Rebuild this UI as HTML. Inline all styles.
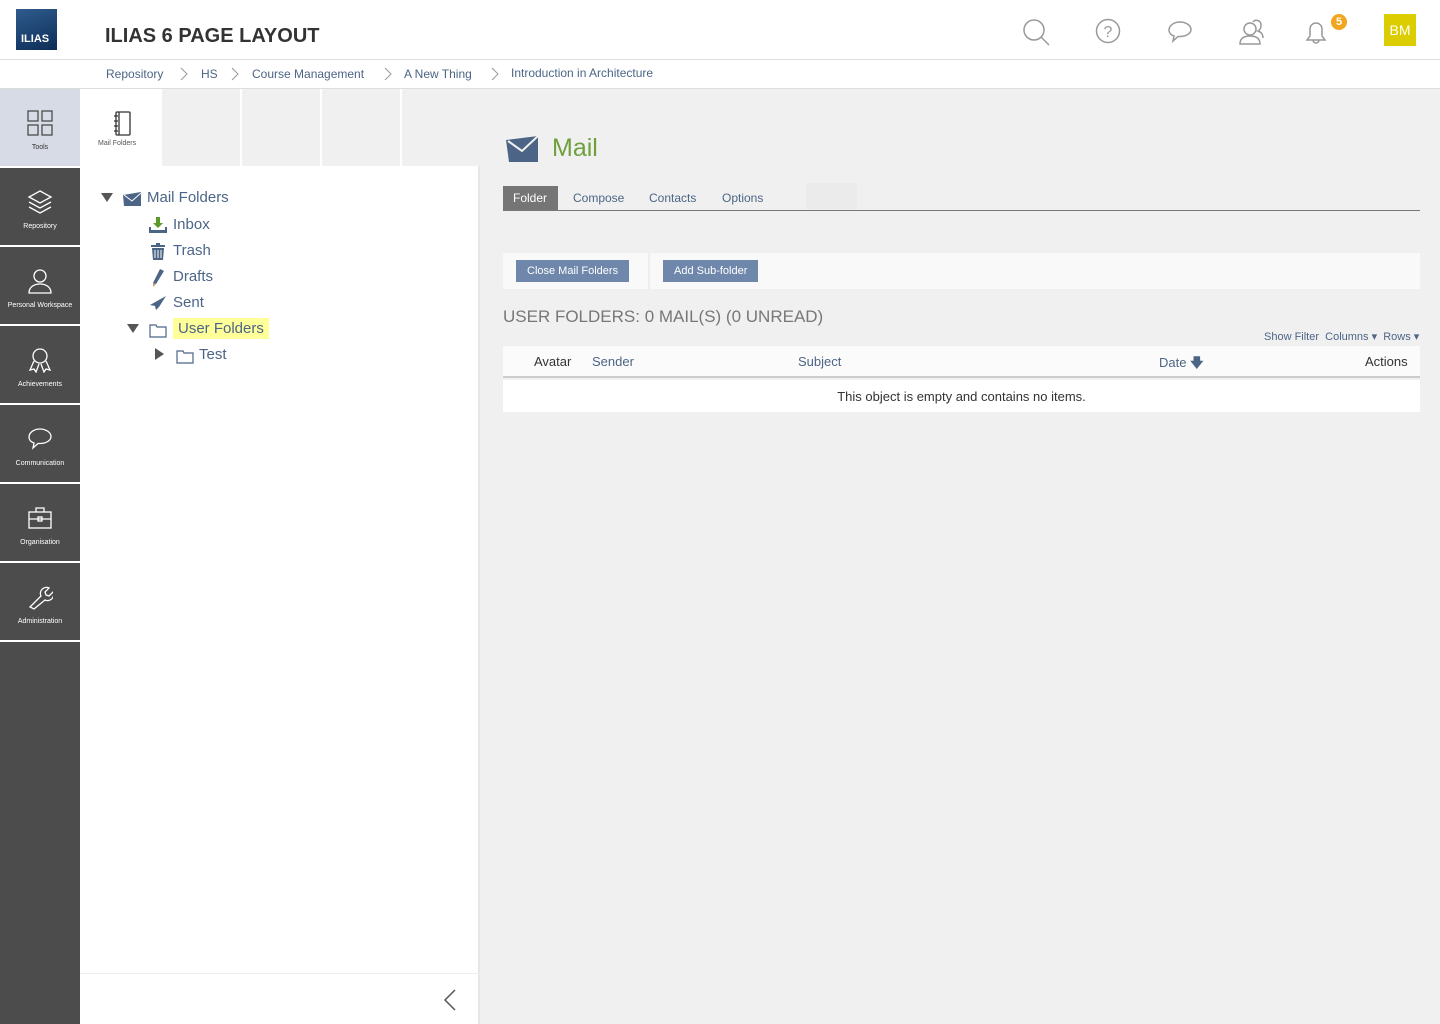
<!DOCTYPE html><html><head><meta charset="utf-8"><style>
*{box-sizing:border-box;margin:0;padding:0}
body{width:1440px;height:1024px;overflow:hidden;background:#f0f0f0;font-family:"Liberation Sans",sans-serif;position:relative}
.a{position:absolute}
.hdr{left:0;top:0;width:1440px;height:60px;background:#fff;border-bottom:1px solid #ddd}
.bc{left:0;top:60px;width:1440px;height:29px;background:#fff;border-bottom:1px solid #ddd;font-size:12px;color:#4c6586}
.side{left:0;top:89px;width:80px;height:935px;background:#4c4c4c}
.tile{position:absolute;left:0;width:80px;height:79px;color:#fff;font-size:7px;text-align:center;border-bottom:2px solid #fff}
.tile svg{display:block;margin:21px auto 8px}
.slate{left:80px;top:89px;width:400px;height:935px;background:#fff;border-right:2px solid #e6e6e6}
.tr{font-size:15px;color:#4c6586}
.btn{background:#6e87aa;color:#fff;font-size:11px;padding:5px 11px;position:absolute}
.ch{position:absolute;top:7px}
</style></head><body>
<div class="a hdr"></div>
<div class="a" style="left:16px;top:9px;width:41px;height:41px;background:linear-gradient(160deg,#2f5c8e,#0d2d57);color:#fff;font-weight:bold;font-size:11px;padding:24px 0 0 5px">ILIAS</div>
<div class="a" style="left:105px;top:25px;font-size:20px;font-weight:bold;color:#333">ILIAS 6 PAGE LAYOUT</div>
<svg class="a" style="left:1022px;top:18px" width="28" height="28" fill="none" stroke="#999" stroke-width="1.5"><circle cx="12" cy="12" r="10"/><path d="M19 19l8 8"/></svg>
<svg class="a" style="left:1095px;top:18px" width="26" height="26" fill="none" stroke="#999" stroke-width="1.5"><circle cx="13" cy="13" r="11.5"/><text x="13" y="19" font-size="16" text-anchor="middle" fill="#999" stroke="none" font-family="Liberation Sans">?</text></svg>
<svg class="a" style="left:1167px;top:20px" width="26" height="24" fill="none" stroke="#999" stroke-width="1.5"><path d="M13 2C7 2 2 5.5 2 10c0 3 2 5 5 6l-1 5 5-4.5h2c6 0 11-3 11-7S19 2 13 2z"/></svg>
<svg class="a" style="left:1238px;top:18px" width="28" height="28" fill="none" stroke="#999" stroke-width="1.5"><circle cx="12" cy="11" r="6"/><path d="M2 26c0-6 4-8 10-8s10 2 10 8z"/><path d="M15 4c2-3 8-2 8 3s-3 6-3 6c3 1 5 3 5 7"/></svg>
<svg class="a" style="left:1303px;top:19px" width="26" height="26" fill="none" stroke="#999" stroke-width="1.5"><path d="M4 21h18l-3-4v-7a6 6 0 0 0-12 0v7z"/><path d="M10 21a3 3 0 0 0 6 0"/></svg>
<div class="a" style="left:1331px;top:14px;width:16px;height:16px;border-radius:8px;background:#f2a51f;color:#fff;font-size:11px;font-weight:bold;text-align:center;line-height:16px">5</div>
<div class="a" style="left:1384px;top:14px;width:32px;height:32px;background:#dccd00;color:#fff;font-size:14px;text-align:center;line-height:32px">BM</div>
<div class="a bc"><span class="a" style="left:106px;top:7px">Repository</span><svg class="ch" style="left:180px" width="8" height="14" fill="none" stroke="#999"><path d="M1 1l6 6-6 6"/></svg><span class="a" style="left:201px;top:7px">HS</span><svg class="ch" style="left:231px" width="8" height="14" fill="none" stroke="#999"><path d="M1 1l6 6-6 6"/></svg><span class="a" style="left:252px;top:7px">Course Management</span><svg class="ch" style="left:384px" width="8" height="14" fill="none" stroke="#999"><path d="M1 1l6 6-6 6"/></svg><span class="a" style="left:404px;top:7px">A New Thing</span><svg class="ch" style="left:491px" width="8" height="14" fill="none" stroke="#999"><path d="M1 1l6 6-6 6"/></svg><span class="a" style="left:511px;top:6px">Introduction in Architecture</span></div>
<div class="a side">
<div class="tile" style="top:0;background:#d6dbe5;color:#333"><svg width="26" height="26" fill="none" stroke="#4c4c4c" stroke-width="1.3"><rect x="1" y="1" width="10" height="10"/><rect x="15" y="1" width="10" height="10"/><rect x="1" y="15" width="10" height="10"/><rect x="15" y="15" width="10" height="10"/></svg>Tools</div>
<div class="tile" style="top:79px"><svg width="26" height="26" fill="none" stroke="#fff" stroke-width="1.3"><path d="M13 2l11 6-11 6L2 8z"/><path d="M2 13l11 6 11-6"/><path d="M2 18l11 6 11-6"/></svg>Repository</div>
<div class="tile" style="top:158px"><svg width="26" height="26" fill="none" stroke="#fff" stroke-width="1.3"><circle cx="13" cy="8" r="6"/><path d="M2 25c0-6 5-9 11-9s11 3 11 9z"/></svg>Personal Workspace</div>
<div class="tile" style="top:237px"><svg width="26" height="26" fill="none" stroke="#fff" stroke-width="1.3"><circle cx="13" cy="9" r="7"/><path d="M7 14l-4 9 4-1 2 3 3-8M19 14l4 9-4-1-2 3-3-8"/></svg>Achievements</div>
<div class="tile" style="top:316px"><svg width="26" height="26" fill="none" stroke="#fff" stroke-width="1.3"><path d="M13 3C7 3 2 6.5 2 11c0 3 2 5 5 6l-1 5 5-4.5h2c6 0 11-3 11-7S19 3 13 3z"/></svg>Communication</div>
<div class="tile" style="top:395px"><svg width="26" height="26" fill="none" stroke="#fff" stroke-width="1.3"><rect x="2" y="7" width="22" height="16"/><path d="M9 7V3h8v4M2 14h22"/><rect x="11" y="12" width="4" height="4"/></svg>Organisation</div>
<div class="tile" style="top:474px"><svg width="26" height="26" fill="none" stroke="#fff" stroke-width="1.3"><path d="M3 23l11-11a6 6 0 0 1 8-8l-4 4 1 3 3 1 4-4a6 6 0 0 1-8 8L7 25z"/></svg>Administration</div>
</div>
<div class="a slate">
<div class="a" style="left:82px;top:0;width:318px;height:77px;background:#f0f0f0"></div>
<div class="a" style="left:160px;top:0;width:2px;height:77px;background:#fff"></div>
<div class="a" style="left:240px;top:0;width:2px;height:77px;background:#fff"></div>
<div class="a" style="left:320px;top:0;width:2px;height:77px;background:#fff"></div>
<svg class="a" style="left:31px;top:22px" width="22" height="26" fill="none" stroke="#333" stroke-width="1.3"><rect x="5" y="1" width="14" height="23" rx="1"/><path d="M8 1v23M3 5h4M3 10h4M3 15h4M3 20h4"/></svg>
<div class="a" style="left:18px;top:51px;font-size:7px;color:#555">Mail Folders</div>
<div class="a" style="left:21px;top:104px;width:0;height:0;border:6px solid transparent;border-top:9px solid #555;border-bottom:0"></div>
<svg class="a" style="left:43px;top:103px" width="18" height="14"><path d="M0 3l18-3v14H1z" fill="#4c6586"/><path d="M1 3l8 6 9-8" stroke="#fff" fill="none"/></svg>
<div class="a tr" style="left:67px;top:100px">Mail Folders</div>
<svg class="a" style="left:69px;top:128px" width="18" height="16"><path d="M7 0h4v6h3l-5 5-5-5h3z" fill="#5a9a2a"/><path d="M0 10h2v3h14v-3h2v6H0z" fill="#4c6586"/></svg>
<div class="a tr" style="left:93px;top:127px">Inbox</div>
<svg class="a" style="left:71px;top:154px" width="14" height="17" fill="#4c6586"><rect x="0" y="2" width="14" height="2"/><rect x="5" y="0" width="4" height="2"/><path d="M1 5h12l-1 12H2z"/><path d="M4 7v8M7 7v8M10 7v8" stroke="#fff"/></svg>
<div class="a tr" style="left:93px;top:153px">Trash</div>
<svg class="a" style="left:72px;top:180px" width="12" height="18"><path d="M8 0l4 2-8 13-3-1z" fill="#4c6586"/><path d="M1 14l3 1-3 3z" fill="#c96"/></svg>
<div class="a tr" style="left:93px;top:179px">Drafts</div>
<svg class="a" style="left:70px;top:207px" width="16" height="14"><path d="M16 0L0 9l5 1 1 4 3-3z" fill="#4c6586"/></svg>
<div class="a tr" style="left:93px;top:205px">Sent</div>
<div class="a" style="left:47px;top:235px;width:0;height:0;border:6px solid transparent;border-top:9px solid #555;border-bottom:0"></div>
<svg class="a" style="left:69px;top:234px" width="18" height="15" fill="none" stroke="#4c6586" stroke-width="1.2"><path d="M1 2h6l1 2h9v10H1z"/></svg>
<div class="a tr" style="left:93px;top:229px;background:#ffff99;padding:2px 5px">User Folders</div>
<div class="a" style="left:75px;top:259px;width:0;height:0;border:6px solid transparent;border-left:9px solid #555;border-right:0"></div>
<svg class="a" style="left:96px;top:260px" width="18" height="15" fill="none" stroke="#4c6586" stroke-width="1.2"><path d="M1 2h6l1 2h9v10H1z"/></svg>
<div class="a tr" style="left:119px;top:257px">Test</div>
<div class="a" style="left:0;top:884px;width:400px;height:1px;background:#eee"></div>
<svg class="a" style="left:363px;top:900px" width="14" height="22" fill="none" stroke="#555" stroke-width="1.5"><path d="M12 1L2 11l10 10"/></svg>
</div>
<svg class="a" style="left:506px;top:136px" width="34" height="26"><path d="M0 4L32 0v26H3z" fill="#4c6586"/><path d="M2 5l14 10 16-15" stroke="#f0f0f0" stroke-width="2" fill="none"/></svg>
<div class="a" style="left:552px;top:134px;font-size:25px;color:#6ea03c">Mail</div>
<div class="a" style="left:503px;top:186px;width:55px;height:24px;background:#757575;color:#fff;font-size:12px;padding:5px 0 0 10px">Folder</div>
<div class="a" style="left:573px;top:191px;font-size:12px;color:#4c6586">Compose</div>
<div class="a" style="left:649px;top:191px;font-size:12px;color:#4c6586">Contacts</div>
<div class="a" style="left:722px;top:191px;font-size:12px;color:#4c6586">Options</div>
<div class="a" style="left:806px;top:183px;width:51px;height:26px;background:#ebebeb"></div>
<div class="a" style="left:503px;top:210px;width:917px;height:1px;background:#777"></div>
<div class="a" style="left:503px;top:253px;width:917px;height:36px;background:#f9f9f9"></div>
<div class="a" style="left:648px;top:253px;width:2px;height:36px;background:#eee"></div>
<div class="btn" style="left:516px;top:260px">Close Mail Folders</div>
<div class="btn" style="left:663px;top:260px">Add Sub-folder</div>
<div class="a" style="left:503px;top:307px;font-size:17px;color:#777">USER FOLDERS: 0 MAIL(S) (0 UNREAD)</div>
<div class="a" style="left:1264px;top:330px;font-size:11px;color:#4c6586">Show Filter&nbsp; Columns ▾ &nbsp;Rows ▾</div>
<div class="a" style="left:503px;top:346px;width:917px;height:32px;background:#fbfbfb;border-bottom:2px solid #ccc;font-size:13px"><span class="a" style="left:31px;top:8px;color:#333">Avatar</span><span class="a" style="left:89px;top:8px;color:#4c6586">Sender</span><span class="a" style="left:295px;top:8px;color:#4c6586">Subject</span><span class="a" style="left:656px;top:8px;color:#4c6586">Date <b>&#129095;</b></span><span class="a" style="left:862px;top:8px;color:#333">Actions</span></div>
<div class="a" style="left:503px;top:380px;width:917px;height:32px;background:#fff;font-size:13px;color:#333;text-align:center;padding-top:9px">This object is empty and contains no items.</div>
</body></html>
